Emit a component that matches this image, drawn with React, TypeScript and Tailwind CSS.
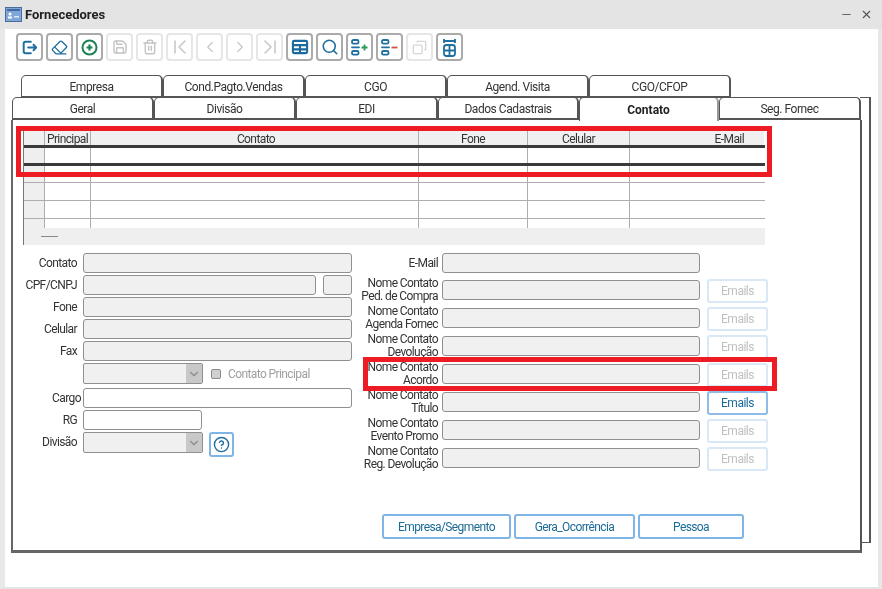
import React from "react";
import { Eraser, Save, Trash2, ChevronLeft, ChevronRight, Search, Copy, X, Minus, ChevronDown, CircleHelp } from "lucide-react";

const BLUE = "#1f6f9f";

function ExitIcon() {
  return (
    <svg width="17" height="17" viewBox="0 0 19 19" fill="none" stroke={BLUE} strokeWidth="2.2" strokeLinecap="round" strokeLinejoin="round">
      <path d="M11 3H5a2 2 0 0 0-2 2v9a2 2 0 0 0 2 2h6" />
      <path d="M8 9.5h9M14 6.5l3 3-3 3" />
    </svg>
  );
}
function PlusIcon() {
  return (
    <svg width="17" height="17" viewBox="0 0 17 17" fill="none" stroke="#1c8350" strokeWidth="2">
      <circle cx="8.5" cy="8.5" r="7" />
      <path d="M5.5 8.5h6M8.5 5.5v6" strokeWidth="2.2" />
    </svg>
  );
}
function TableIcon() {
  return (
    <svg width="18" height="18" viewBox="0 0 19 19" fill="none" stroke="#1a6aa0" strokeWidth="2.2">
      <rect x="2" y="3" width="15" height="13" rx="1.5" />
      <path d="M2 7.5h15M2 12h15M9.5 7.5V16" />
    </svg>
  );
}
function EdgeChevron({ dir }: { dir: "first" | "last" }) {
  return (
    <svg width="16" height="16" viewBox="0 0 16 16" fill="none" stroke="#c8c8c8" strokeWidth="1.6" strokeLinecap="round" strokeLinejoin="round">
      {dir === "first" ? <path d="M3 2v12M13 2 7 8l6 6" /> : <path d="M13 2v12M3 2l6 6-6 6" />}
    </svg>
  );
}
function ListIcon({ sign }: { sign: "plus" | "minus" }) {
  return (
    <svg width="21" height="21" viewBox="0 0 21 21" fill="none" strokeWidth="1.8">
      <rect x="3" y="3" width="6.5" height="3.6" rx="1.4" stroke={BLUE} />
      <rect x="3" y="14" width="6.5" height="3.6" rx="1.4" stroke={BLUE} />
      <path d="M3 10.3h7" stroke={BLUE} strokeLinecap="round" />
      {sign === "plus" ? <path d="M12.5 10.5h6M15.5 7.5v6" stroke="#2a9a5a" /> : <path d="M12.5 10.5h6" stroke="#d0524f" />}
    </svg>
  );
}
function ColumnsIcon() {
  return (
    <svg width="19" height="19" viewBox="0 0 19 19" fill="none" stroke={BLUE} strokeWidth="1.8">
      <path d="M4 1v4M15 1v4M4 3h11" />
      <rect x="4" y="7" width="11" height="11" rx="2.5" />
      <path d="M4 12.5h11M9.5 7v11" />
    </svg>
  );
}

const toolbar: { icon: React.ReactNode; on: boolean }[] = [
  { icon: <ExitIcon />, on: true },
  { icon: <Eraser size={17} color={BLUE} strokeWidth={1.9} />, on: true },
  { icon: <PlusIcon />, on: true },
  { icon: <Save size={16} color="#c4c4c4" strokeWidth={2.2} />, on: false },
  { icon: <Trash2 size={16} color="#c4c4c4" strokeWidth={2.2} />, on: false },
  { icon: <EdgeChevron dir="first" />, on: false },
  { icon: <ChevronLeft size={18} color="#c8c8c8" strokeWidth={1.7} />, on: false },
  { icon: <ChevronRight size={18} color="#c8c8c8" strokeWidth={1.7} />, on: false },
  { icon: <EdgeChevron dir="last" />, on: false },
  { icon: <TableIcon />, on: true },
  { icon: <Search size={18} color={BLUE} strokeWidth={2.1} />, on: true },
  { icon: <ListIcon sign="plus" />, on: true },
  { icon: <ListIcon sign="minus" />, on: true },
  { icon: <Copy size={15} color="#cdcdcd" strokeWidth={1.7} className="-scale-x-100" />, on: false },
  { icon: <ColumnsIcon />, on: true },
];

function Tab({ label, w, active }: { label: string; w: string; active?: boolean }) {
  return (
    <div
      className={`${w} shrink-0 flex items-center justify-center rounded-t-[5px] border-t border-l border-r-2 border-[#555] bg-white text-[12px] tracking-[-0.45px] ${
        active ? "font-bold text-[#222] h-[24px] -mb-[1px] z-10 border-r-[#999] tracking-normal" : "text-[#333] border-b-2 h-[23px] pt-[2px]"
      }`}
    >
      {label}
    </div>
  );
}

function GridRow({ h, line, header }: { h: string; line: string; header?: boolean }) {
  const base = header ? "bg-[#f0f0f0] pt-[1px]" : "bg-white";
  const cell = `${base} border-r border-[#aeaeae] flex items-center justify-center text-[12px] tracking-[-0.6px] text-[#333]`;
  return (
    <div className={`flex ${h} ${line}`}>
      <div className="w-[21px] bg-[#efefef] border-r border-[#aeaeae]" />
      <div className={`${cell} w-[46px]`}>{header && "Principal"}</div>
      <div className={`${cell} w-[328px] pl-[3px]`}>{header && "Contato"}</div>
      <div className={`${cell} w-[109px]`}>{header && "Fone"}</div>
      <div className={`${cell} w-[102px]`}>{header && "Celular"}</div>
      <div className={`${base} w-[134px] flex items-center justify-end pr-[20px] text-[12px] tracking-[-0.6px] text-[#333]`}>{header && "E-Mail"}</div>
    </div>
  );
}

function Field({ w = "w-[269px]", white }: { w?: string; white?: boolean }) {
  return <div className={`${w} h-[20px] rounded-[3px] border border-[#8f8f8f] shrink-0 ${white ? "bg-white" : "bg-[#f0f0f0]"}`} />;
}

function LeftRow({ label, children, wide }: { label?: string; children: React.ReactNode; wide?: boolean }) {
  return (
    <div className="flex items-center">
      <div className={`text-[12px] tracking-[-0.6px] text-[#333] text-right shrink-0 ${wide ? "w-[58px] mr-[2px]" : "w-[54px] mr-[6px]"}`}>{label}</div>
      {children}
    </div>
  );
}

function Combo() {
  return (
    <div className="w-[120px] h-[21px] rounded-[2px] border border-[#8f8f8f] bg-[#f0f0f0] flex justify-end shrink-0">
      <div className="w-[16px] bg-[#c8c8c8] flex items-center justify-center">
        <ChevronDown size={14} color="#8a8a8a" />
      </div>
    </div>
  );
}

function EmailRow({ top, bottom, active }: { top: string; bottom: string; active?: boolean }) {
  return (
    <div className="flex items-center h-[28px]">
      <div className="w-[78px] mr-[4px] text-right text-[12px] tracking-[-0.6px] leading-[13px] text-[#333] shrink-0 whitespace-nowrap">
        {top}
        <br />
        {bottom}
      </div>
      <Field w="w-[258px]" />
      <div
        className={`ml-[7px] mt-[2px] w-[61px] h-[24px] rounded-[3px] border-2 flex items-center justify-center text-[12px] tracking-[-0.5px] ${
          active ? "border-[#8dbde8] text-[#1c6a96]" : "border-[#d8e8f7] text-[#c0c0c0]"
        }`}
      >
        Emails
      </div>
    </div>
  );
}

function BottomButton({ label, w }: { label: string; w: string }) {
  return (
    <div className={`${w} h-[25px] rounded-[3px] border-2 border-[#7fb5e6] flex items-center justify-center text-[12px] tracking-[-0.6px] text-[#1c6a96]`}>{label}</div>
  );
}

export default function App() {
  return (
    <div
      className="relative w-[882px] h-[589px] overflow-hidden bg-white blur-[0.35px] flex flex-col"
      style={{ fontFamily: 'Roboto, "Liberation Sans", Arial, sans-serif' }}
    >
      <div className="h-[29px] shrink-0 bg-[#e4e4e4] flex items-center pl-[5px] pr-[9px]">
        <svg width="17" height="15" viewBox="0 0 17 15" className="mr-[3px]">
          <rect x="0.5" y="0.5" width="16" height="14" fill="#7fa6d6" stroke="#4a6d9c" />
          <rect x="2" y="2" width="13" height="2" fill="#3f6aa5" />
          <circle cx="5" cy="7" r="1.5" fill="#fff" />
          <rect x="3" y="9.5" width="4" height="2" fill="#fff" />
          <rect x="9" y="9" width="5" height="1.5" fill="#dfe9f6" />
        </svg>
        <span className="text-[13px] font-bold text-[#222] pt-[1px]">Fornecedores</span>
        <div className="ml-auto flex items-center gap-[7px]">
          <Minus size={13} color="#666" strokeWidth={2} />
          <X size={13} color="#555" strokeWidth={2} />
        </div>
      </div>

      <div className="flex-1 flex border-x-[5px] border-b-[2px] border-x-[#e8e8e8] border-b-[#e4e4e4] border-r-[4px] min-h-0">
        <div className="flex-1 flex flex-col relative">
          <div className="flex gap-[3px] pt-[4px] pl-[11px]">
            {toolbar.map((b, i) => (
              <div
                key={i}
                className={`w-[27px] h-[28px] rounded-[4px] border-2 flex items-center justify-center ${b.on ? "border-[#ababab]" : "border-[#e6e6e6]"}`}
              >
                {b.icon}
              </div>
            ))}
          </div>

          <div className="relative mt-[14px] ml-[6px]">
            <div className="absolute left-[849px] top-[22px] w-[11px] h-[446px] border-y border-r-2 border-[#555]" />
            <div className="flex pl-[10px] relative">
              {["Empresa", "Cond.Pagto.Vendas", "CGO", "Agend. Visita", "CGO/CFOP"].map((t) => (
                <Tab key={t} label={t} w="w-[142px]" />
              ))}
            </div>
            <div className="flex pl-[1px] -mt-[1px] relative">
              <Tab label="Geral" w="w-[142px]" />
              <Tab label="Divisão" w="w-[142px]" />
              <Tab label="EDI" w="w-[142px]" />
              <Tab label="Dados Cadastrais" w="w-[141px]" />
              <Tab label="Contato" w="w-[140px]" active />
              <Tab label="Seg. Fornec" w="w-[142px]" />
            </div>
            <div className="relative w-[851px] h-[433px] bg-white border-l-2 border-l-[#666] border-r-2 border-b-[3px] border-[#555] border-b-[#666] pl-[10px] pt-[11px]">
              <div className="w-[742px] h-[114px] border-l border-[#777] flex flex-col bg-white">
                <GridRow h="h-[17px]" line="border-b-[3px] border-[#3a3a3a]" header />
                <GridRow h="h-[18px]" line="border-b-[3px] border-[#3a3a3a]" />
                <GridRow h="h-[17px]" line="border-b border-[#aeaeae]" />
                <GridRow h="h-[18px]" line="border-b border-[#aeaeae]" />
                <GridRow h="h-[18px]" line="border-b border-[#aeaeae]" />
                <GridRow h="h-[9px]" line="" />
                <div className="flex-1 bg-[#efefef] flex items-center pl-[17px]">
                  <div className="w-[17px] h-[1px] bg-[#8a8a8a]" />
                </div>
              </div>

              <div className="flex mt-[8px]">
                <div className="w-[329px] flex flex-col gap-[2px] shrink-0">
                  <LeftRow label="Contato"><Field /></LeftRow>
                  <LeftRow label="CPF/CNPJ">
                    <Field w="w-[233px]" />
                    <Field w="w-[29px] ml-[7px]" />
                  </LeftRow>
                  <LeftRow label="Fone"><Field /></LeftRow>
                  <LeftRow label="Celular"><Field /></LeftRow>
                  <LeftRow label="Fax"><Field /></LeftRow>
                  <LeftRow>
                    <Combo />
                    <div className="ml-[8px] w-[10px] h-[10px] rounded-[2px] border border-[#8a8a8a] bg-[#d0d0d0]" />
                    <span className="ml-[7px] text-[12px] tracking-[-0.6px] text-[#a0a0a0]">Contato Principal</span>
                  </LeftRow>
                  <div className="h-0" />
                  <LeftRow label="Cargo" wide><Field white /></LeftRow>
                  <LeftRow label="RG"><Field w="w-[119px]" white /></LeftRow>
                  <div className="flex items-start">
                    <div className="w-[54px] mr-[6px] text-[12px] tracking-[-0.6px] text-[#333] text-right leading-[20px] shrink-0">Divisão</div>
                    <Combo />
                    <div className="ml-[6px] w-[25px] h-[25px] rounded-[3px] border-2 border-[#7fb5e6] flex items-center justify-center">
                      <CircleHelp size={17} color={BLUE} strokeWidth={2} />
                    </div>
                  </div>
                </div>

                <div className="ml-[8px] flex flex-col">
                  <div className="flex h-[23px]">
                    <div className="w-[78px] mr-[4px] text-right text-[12px] tracking-[-0.6px] text-[#333] leading-[20px]">E-Mail</div>
                    <Field w="w-[258px]" />
                  </div>
                  <EmailRow top="Nome Contato" bottom="Ped. de Compra" />
                  <EmailRow top="Nome Contato" bottom="Agenda Fornec" />
                  <EmailRow top="Nome Contato" bottom="Devolução" />
                  <EmailRow top="Nome Contato" bottom="Acordo" />
                  <EmailRow top="Nome Contato" bottom="Título" active />
                  <EmailRow top="Nome Contato" bottom="Evento Promo" />
                  <EmailRow top="Nome Contato" bottom="Reg. Devolução" />
                </div>
              </div>

              <div className="flex gap-[3px] ml-[359px] mt-[42px]">
                <BottomButton label="Empresa/Segmento" w="w-[129px]" />
                <BottomButton label="Gera_Ocorrência" w="w-[121px]" />
                <BottomButton label="Pessoa" w="w-[106px]" />
              </div>
            </div>
          </div>
        </div>
      </div>

      <div className="absolute left-[16px] top-[126px] w-[756px] h-[51px] border-[5px] border-[#ed1c24]" />
      <div className="absolute left-[363px] top-[357px] w-[414px] h-[34px] border-[5px] border-[#ed1c24]" />
    </div>
  );
}
